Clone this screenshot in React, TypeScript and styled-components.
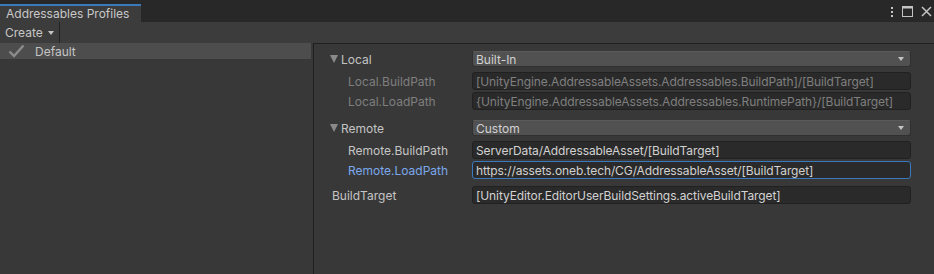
import React from "react";
import styled, { createGlobalStyle } from "styled-components";

const GlobalStyle = createGlobalStyle`
  html, body {
    margin: 0;
    padding: 0;
    background: #383838;
  }
  body {
    font-family: "Inter", "Liberation Sans", sans-serif;
    font-size: 12px;
    color: #c4c4c4;
  }
`;

export const Window = styled.div`
  width: 934px;
  height: 274px;
  display: flex;
  flex-direction: column;
  background: #383838;
  overflow: hidden;
`;

export const TabBar = styled.div`
  height: 22px;
  display: flex;
  align-items: flex-end;
  background: #282828;
  flex: none;
`;

export const Tab = styled.div`
  width: 141px;
  height: 18px;
  box-sizing: border-box;
  border-top: 2px solid #3a79bb;
  background: #3c3c3c;
  padding-left: 6px;
  line-height: 16px;
  color: #c8c8c8;
  white-space: nowrap;
`;

export const WindowIcons = styled.div`
  margin-left: auto;
  align-self: center;
  display: flex;
  align-items: center;
  gap: 8px;
  padding: 1px 2px 0 0;
  color: #c4c4c4;
`;

export const Toolbar = styled.div`
  height: 21px;
  display: flex;
  align-items: stretch;
  background: #3c3c3c;
  flex: none;
`;

export const ToolbarDropdown = styled.div`
  display: flex;
  align-items: center;
  gap: 5px;
  padding: 0 5px 0 5px;
  border-right: 1px solid #232323;
  color: #c8c8c8;
`;

export const Caret = styled.span`
  width: 0;
  height: 0;
  border-left: 3.5px solid transparent;
  border-right: 3.5px solid transparent;
  border-top: 4px solid #c4c4c4;
`;

export const Body = styled.div`
  flex: 1;
  display: flex;
`;

export const ProfileList = styled.div`
  width: 313px;
  display: flex;
  flex-direction: column;
  padding-right: 2px;
  box-sizing: border-box;
`;

export const ProfileRow = styled.div<{ $selected?: boolean }>`
  height: 16px;
  display: flex;
  align-items: center;
  gap: 10px;
  padding-left: 8px;
  background: ${(p) => (p.$selected ? "#4d4d4d" : "transparent")};
  color: #c4c4c4;
`;

export const Inspector = styled.div`
  flex: 1;
  border-left: 1px solid #1f1f1f;
  border-top: 1px solid #1f1f1f;
  padding: 6px 23px 0 18px;
  display: flex;
  flex-direction: column;
`;

export const Row = styled.div<{ $gap: number }>`
  display: grid;
  grid-template-columns: 140px 1fr;
  align-items: center;
  height: 18px;
  margin-top: ${(p) => p.$gap}px;
`;

export const Label = styled.div<{ $indent: number; $tone: "normal" | "dim" | "focus" }>`
  display: flex;
  align-items: center;
  gap: 3px;
  padding-left: ${(p) => p.$indent}px;
  white-space: nowrap;
  color: ${(p) =>
    p.$tone === "dim" ? "#7f7f7f" : p.$tone === "focus" ? "#7ba8ec" : "#c4c4c4"};
`;

export const Foldout = styled.span`
  width: 0;
  height: 0;
  border-left: 4.5px solid transparent;
  border-right: 4.5px solid transparent;
  border-top: 8px solid #8a8a8a;
  margin-left: -2px;
`;

export const Popup = styled.div`
  height: 16px;
  border-radius: 3px;
  background: #515151;
  border: 1px solid #303030;
  border-top-color: #5a5a5a;
  box-sizing: border-box;
  display: flex;
  align-items: center;
  justify-content: space-between;
  padding: 0 6px 0 3px;
  color: #d2d2d2;
`;

export const Field = styled.div<{ $dim?: boolean; $focused?: boolean }>`
  height: 18px;
  box-sizing: border-box;
  border-radius: 3px;
  background: #2a2a2a;
  border: 1px solid ${(p) => (p.$focused ? "#3a79bb" : "#212121")};
  padding: 0 3px;
  display: flex;
  align-items: center;
  white-space: nowrap;
  overflow: hidden;
  letter-spacing: -0.1px;
  color: ${(p) => (p.$dim ? "#7f7f7f" : "#d2d2d2")};
`;

const CheckIcon = () => (
  <svg width="17" height="14" viewBox="0 0 17 14">
    <path d="M1.5 7.5 L6 12 L15.5 1.5" fill="none" stroke="#8c8c8c" strokeWidth="2.4" />
  </svg>
);

const MenuIcon = () => (
  <svg width="4" height="12" viewBox="0 0 4 12">
    <rect x="1" y="1" width="2" height="2" fill="#c4c4c4" />
    <rect x="1" y="5" width="2" height="2" fill="#c4c4c4" />
    <rect x="1" y="9" width="2" height="2" fill="#c4c4c4" />
  </svg>
);

const MaxIcon = () => (
  <svg width="11" height="11" viewBox="0 0 11 11">
    <rect x="0.5" y="0.5" width="10" height="10" fill="none" stroke="#c4c4c4" />
    <rect x="0" y="0" width="11" height="2.5" fill="#c4c4c4" />
  </svg>
);

const CloseIcon = () => (
  <svg width="11" height="11" viewBox="0 0 11 11">
    <path d="M1 1 L10 10 M10 1 L1 10" stroke="#c4c4c4" strokeWidth="1.5" />
  </svg>
);

type Entry =
  | { kind: "group"; label: string; value: string; gap: number }
  | {
      kind: "path";
      label: string;
      value: string;
      gap: number;
      indent: number;
      tone: "normal" | "dim" | "focus";
    };

const entries: Entry[] = [
  { kind: "group", label: "Local", value: "Built-In", gap: 0 },
  {
    kind: "path",
    label: "Local.BuildPath",
    value: "[UnityEngine.AddressableAssets.Addressables.BuildPath]/[BuildTarget]",
    gap: 4,
    indent: 16,
    tone: "dim",
  },
  {
    kind: "path",
    label: "Local.LoadPath",
    value: "{UnityEngine.AddressableAssets.Addressables.RuntimePath}/[BuildTarget]",
    gap: 2,
    indent: 16,
    tone: "dim",
  },
  { kind: "group", label: "Remote", value: "Custom", gap: 9 },
  {
    kind: "path",
    label: "Remote.BuildPath",
    value: "ServerData/AddressableAsset/[BuildTarget]",
    gap: 4,
    indent: 16,
    tone: "normal",
  },
  {
    kind: "path",
    label: "Remote.LoadPath",
    value: "https://assets.oneb.tech/CG/AddressableAsset/[BuildTarget]",
    gap: 2,
    indent: 16,
    tone: "focus",
  },
  {
    kind: "path",
    label: "BuildTarget",
    value: "[UnityEditor.EditorUserBuildSettings.activeBuildTarget]",
    gap: 7,
    indent: 0,
    tone: "normal",
  },
];

const App: React.FC = () => {
  return (
    <>
      <GlobalStyle />
      <Window>
        <TabBar>
          <Tab>Addressables Profiles</Tab>
          <WindowIcons>
            <MenuIcon />
            <MaxIcon />
            <CloseIcon />
          </WindowIcons>
        </TabBar>
        <Toolbar>
          <ToolbarDropdown>
            Create
            <Caret />
          </ToolbarDropdown>
        </Toolbar>
        <Body>
          <ProfileList>
            <ProfileRow $selected>
              <CheckIcon />
              Default
            </ProfileRow>
          </ProfileList>
          <Inspector>
            {entries.map((e) =>
              e.kind === "group" ? (
                <Row key={e.label} $gap={e.gap}>
                  <Label $indent={0} $tone="normal">
                    <Foldout />
                    {e.label}
                  </Label>
                  <Popup>
                    {e.value}
                    <Caret />
                  </Popup>
                </Row>
              ) : (
                <Row key={e.label} $gap={e.gap}>
                  <Label $indent={e.indent} $tone={e.tone}>
                    {e.label}
                  </Label>
                  <Field $dim={e.tone === "dim"} $focused={e.tone === "focus"}>
                    {e.value}
                  </Field>
                </Row>
              )
            )}
          </Inspector>
        </Body>
      </Window>
    </>
  );
};

export default App;
